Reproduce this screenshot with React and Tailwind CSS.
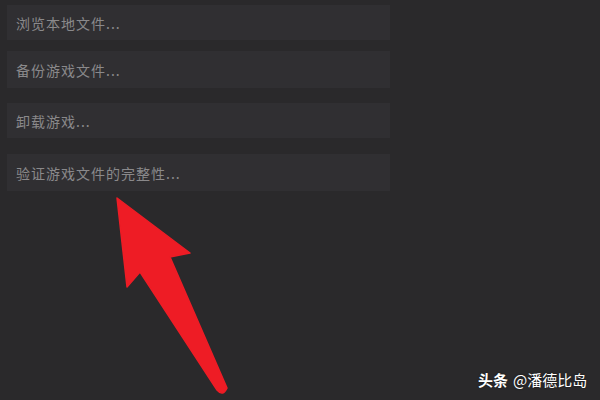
const ROWS = [
  { label: '浏览本地文件...', h: 'h-[35px]', mt: 'mt-[5px]' },
  { label: '备份游戏文件...', h: 'h-[37px]', mt: 'mt-[11px]' },
  { label: '卸载游戏...', h: 'h-[35px]', mt: 'mt-[15px]' },
  { label: '验证游戏文件的完整性...', h: 'h-[37px]', mt: 'mt-[16px]' },
]

export default function App() {
  return (
    <div
      className="relative w-[600px] h-[400px] overflow-hidden bg-[#2a292b]"
      style={{ fontFamily: '"Noto Sans CJK SC", "Noto Sans", sans-serif' }}
    >
      <div className="flex flex-col pl-[7px] w-[390px]">
        {ROWS.map((r) => (
          <div key={r.label} className={`${r.mt} ${r.h} flex items-center pl-[9px] pt-[2px] bg-[#302f32]`}>
            <span className="text-[14px] tracking-[1px] text-[#8a898b]">{r.label}</span>
          </div>
        ))}
      </div>

      {/* red arrow */}
      <svg className="absolute left-0 top-0" width="600" height="400" viewBox="0 0 600 400">
        <path
          d="M117 198 L190 253 L170 257 L227 388 Q223 397 217 390 L140 272 L127 287 Z"
          fill="#ee1c25"
          stroke="#ee1c25"
          strokeWidth="1.5"
          strokeLinejoin="round"
        />
      </svg>

      {/* watermark */}
      <div className="absolute left-[478px] top-[370px] flex items-center gap-[5px] text-white text-[15px] leading-[20px] [text-shadow:0_0_2px_rgba(0,0,0,0.6)]">
        <span className="font-bold">头条</span>
        <span>@潘德比岛</span>
      </div>
    </div>
  )
}
